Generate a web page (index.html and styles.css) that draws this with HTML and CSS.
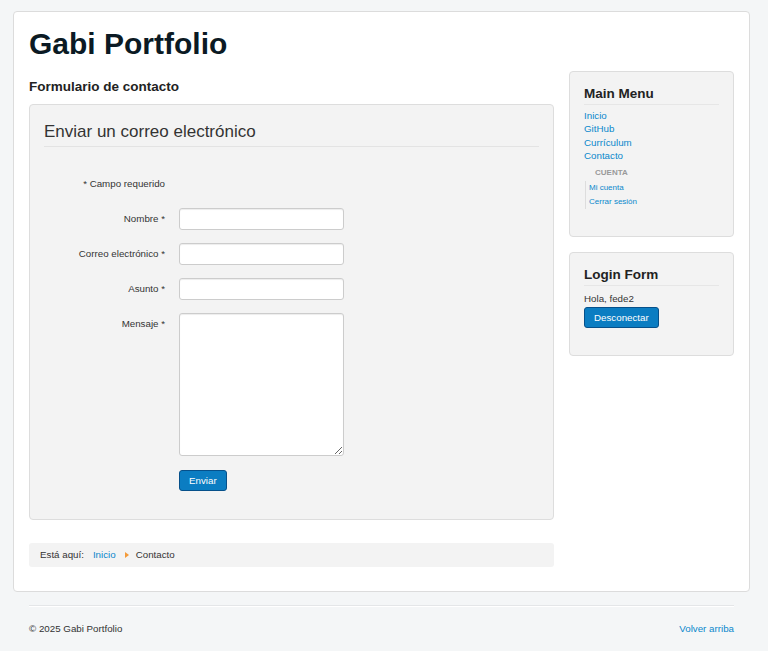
FILE: index.html
```html
<!DOCTYPE html>
<html lang="es">
<head>
<meta charset="utf-8">
<title>Gabi Portfolio - Contacto</title>
<link rel="stylesheet" href="styles.css">
</head>
<body>
<div class="site">
  <h1 class="brand">Gabi Portfolio</h1>
  <div class="row">
    <main class="main">
      <h2 class="page-header">Formulario de contacto</h2>
      <form class="well contact-form">
        <div class="legend">Enviar un correo electrónico</div>
        <div class="form-grid">
          <div class="req-note">* Campo requerido</div>
          <div></div>
          <label class="lbl" for="n">Nombre *</label>
          <input class="field" id="n" type="text">
          <label class="lbl" for="e">Correo electrónico *</label>
          <input class="field" id="e" type="email">
          <label class="lbl" for="s">Asunto *</label>
          <input class="field" id="s" type="text">
          <label class="lbl" for="m">Mensaje *</label>
          <textarea class="field area" id="m"></textarea>
          <div></div>
          <div><button type="button" class="btn">Enviar</button></div>
        </div>
      </form>
      <div class="breadcrumb">
        <span class="bc-label">Está aquí:</span>
        <a href="#" class="link">Inicio</a>
        <span class="bc-sep"></span>
        <span>Contacto</span>
      </div>
    </main>
    <aside class="sidebar">
      <div class="well module">
        <h3 class="module-title">Main Menu</h3>
        <ul class="menu">
          <li><a href="#" class="link">Inicio</a></li>
          <li><a href="#" class="link">GitHub</a></li>
          <li><a href="#" class="link">Currículum</a></li>
          <li><a href="#" class="link">Contacto</a></li>
          <li class="nav-header">Cuenta</li>
          <li>
            <ul class="submenu">
              <li><a href="#" class="link">Mi cuenta</a></li>
              <li><a href="#" class="link">Cerrar sesión</a></li>
            </ul>
          </li>
        </ul>
      </div>
      <div class="well module login">
        <h3 class="module-title">Login Form</h3>
        <p class="greeting">Hola, fede2</p>
        <button type="button" class="btn">Desconectar</button>
      </div>
    </aside>
  </div>
</div>
<footer class="footer">
  <hr class="footer-rule">
  <div class="footer-row">
    <span>© 2025 Gabi Portfolio</span>
    <a href="#" class="link">Volver arriba</a>
  </div>
</footer>
</body>
</html>
```
FILE: styles.css
```css
* { box-sizing: border-box; }
html, body { margin: 0; padding: 0; }
body {
  background: #f4f6f7;
  font-family: "Liberation Sans", Arial, sans-serif;
  font-size: 9.75px;
  line-height: 13.4px;
  color: #333;
}
.site {
  margin: 11px 0 0 13px;
  width: 737px;
  background: #fff;
  border: 1px solid #dcdcdc;
  border-radius: 4px;
  padding: 15px;
}
.brand {
  margin: 0;
  font-size: 30px;
  line-height: 34px;
  font-weight: bold;
  color: #0b1a24;
}
.row {
  display: grid;
  grid-template-columns: 525px 165px;
  column-gap: 15px;
  margin-top: 10px;
  align-items: start;
}
.page-header {
  margin: 7px 0 8px;
  font-size: 13.5px;
  line-height: 18px;
  font-weight: bold;
  color: #222;
}
.well {
  background: #f3f3f3;
  border: 1px solid #dddddd;
  border-radius: 4px;
  padding: 14px;
}
.contact-form { padding-bottom: 28px; }
.legend {
  margin-top: 1px;
  font-size: 17px;
  line-height: 24px;
  color: #333;
  padding-bottom: 2px;
  border-bottom: 1px solid #e3e3e3;
}
.form-grid {
  display: grid;
  grid-template-columns: 121px 165px;
  column-gap: 14px;
  row-gap: 13px;
  margin-top: 30px;
  align-items: center;
}
.req-note {
  text-align: right;
  line-height: 14px;
  margin-bottom: 4px;
}
.lbl {
  text-align: right;
  line-height: 14px;
}
.lbl:nth-of-type(4) { align-self: start; padding-top: 4px; }
.field {
  display: block;
  width: 165px;
  height: 22px;
  margin: 0;
  background: #fff;
  border: 1px solid #cccccc;
  border-radius: 3px;
  box-shadow: inset 0 1px 1px rgba(0,0,0,.075);
  font: inherit;
}
.area { height: 143px; resize: both; }
.btn {
  display: inline-block;
  margin: 1px 0 0;
  padding: 3px 9px;
  font-family: inherit;
  font-size: 9.75px;
  line-height: 13px;
  color: #fff;
  background: #0b7dc2;
  border: 1px solid #06508a;
  border-radius: 3px;
}
.breadcrumb {
  margin: 23px 0 9px;
  height: 24px;
  line-height: 24px;
  padding: 0 11px;
  background: #f3f3f3;
  border-radius: 3px;
  display: flex;
  align-items: center;
}
.bc-label { margin-right: 9px; }
.bc-sep {
  display: inline-block;
  width: 0; height: 0;
  border-left: 4px solid #f39a3a;
  border-top: 3px solid transparent;
  border-bottom: 3px solid transparent;
  margin: 0 7px 0 9px;
}
.link { color: #0a88cc; text-decoration: none; }
.module-title {
  margin: 0;
  font-size: 13.5px;
  line-height: 16px;
  font-weight: bold;
  color: #222;
  padding-bottom: 2px;
  border-bottom: 1px solid #e6e6e6;
}
.module { padding-bottom: 27px; }
.module + .module { margin-top: 15px; }
.menu, .submenu { list-style: none; margin: 0; padding: 0; }
.menu { margin-top: 4px; }
.nav-header {
  font-size: 8px;
  line-height: 10px;
  font-weight: bold;
  text-transform: uppercase;
  color: #999;
  padding: 5px 11px 1px;
}
.submenu {
  margin: 2px 0 0 1px;
  padding-left: 3px;
  border-left: 1px solid #dddddd;
  font-size: 8px;
  line-height: 14px;
}
.greeting { margin: 6px 0 1px; }
.login { padding-bottom: 27px; }
.footer {
  margin-left: 13px;
  width: 737px;
  padding: 0 16px;
}
.footer-rule {
  margin: 13px 0 0;
  border: 0;
  border-top: 1px solid #e4e6e8;
  border-bottom: 1px solid #fff;
}
.footer-row {
  display: flex;
  justify-content: space-between;
  margin-top: 15px;
  line-height: 14px;
}
```
